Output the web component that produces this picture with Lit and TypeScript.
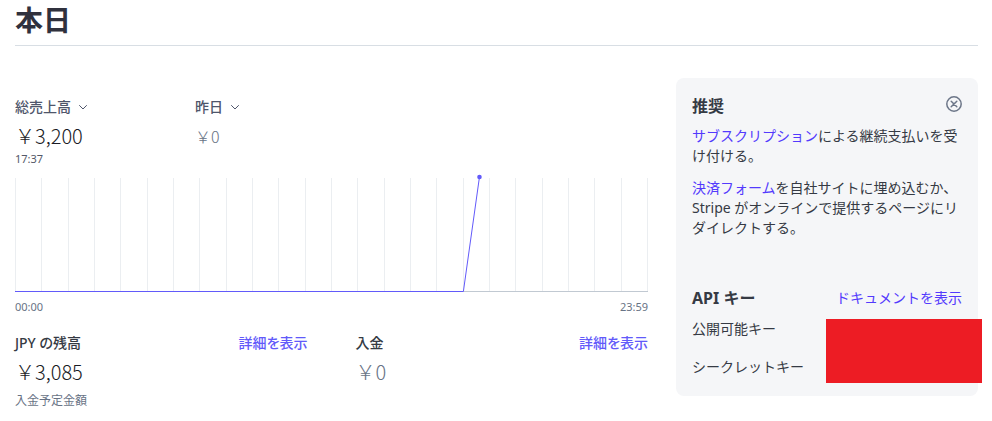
import { LitElement, html, css } from "lit";
import { customElement, property } from "lit/decorators.js";

const HOURS = 24;
const FULLWIDTH_YEN = "\uFFE5";

/** Compact drop-down whose chevron follows the chosen text. */
@customElement("metric-select")
class MetricSelect extends LitElement {
  @property() value = "";
  @property() label = "";

  static styles = css`
    :host {
      display: flex;
      align-items: center;
      gap: 8px;
      height: 20px;
      color: #4f566b;
    }
    select {
      appearance: none;
      border: 0;
      margin: 0;
      padding: 0;
      background: none;
      color: inherit;
      font: inherit;
      font-weight: 500;
      line-height: 20px;
      field-sizing: content;
      cursor: pointer;
    }
    .chevron {
      width: 8px;
      height: 8px;
      pointer-events: none;
    }
  `;

  render() {
    return html`
      <select aria-label=${this.label}><option>${this.value}</option></select>
      <svg class="chevron" viewBox="0 0 8 8" fill="none" stroke="currentColor" stroke-linecap="round" stroke-linejoin="round" aria-hidden="true">
        <path d="M.5 2.5 4 6l3.500-3.500" />
      </svg>
    `;
  }
}

/** Hourly sales line for a single day. */
@customElement("sales-chart")
class SalesChart extends LitElement {
  @property({ type: Number }) from = 17;
  @property({ type: Number }) to = 17.61;

  static styles = css`
    :host {
      display: block;
    }
    .plot {
      position: relative;
      display: flex;
      justify-content: space-between;
      height: 113px;
      border-bottom: 1px solid #c1c9d2;
    }
    .tick {
      width: 1px;
      background: #ebeef1;
    }
    .line {
      position: absolute;
      top: 0;
      left: 0;
      width: 100%;
      height: 114px;
      overflow: visible;
      color: #625afa;
    }
    .axis {
      display: flex;
      justify-content: space-between;
      margin-top: 6px;
      font-size: 11px;
      line-height: 18px;
      color: #687385;
    }
  `;

  render() {
    const pct = (hour: number) => `${(hour / HOURS) * 100}%`;
    return html`
      <div class="plot">
        ${Array.from({ length: HOURS + 1 }, () => html`<span class="tick"></span>`)}
        <svg class="line" stroke="currentColor" fill="currentColor" role="img" aria-label="本日の総売上高">
          <line x1="0" y1="113.500" x2=${pct(this.from)} y2="113.500" />
          <line x1=${pct(this.from)} y1="113.500" x2=${pct(this.to)} y2="-1" />
          <circle cx=${pct(this.to)} cy="-1" r="2.300" stroke="none" />
        </svg>
      </div>
      <div class="axis"><span>00:00</span><span>23:59</span></div>
    `;
  }
}

@customElement("app-root")
class AppRoot extends LitElement {
  static styles = css`
    :host {
      display: block;
      padding: 0 14px 0 15px;
      background: #fff;
      color: #353a44;
      font-family: "Noto Sans", "Noto Sans CJK JP", sans-serif;
      font-size: 14px;
      line-height: 20px;
    }
    h1,
    h2,
    h3,
    p,
    dl,
    dt,
    dd {
      margin: 0;
    }
    a {
      color: #533afd;
      text-decoration: none;
    }
    .title {
      padding-bottom: 5px;
      border-bottom: 1px solid #d8dee4;
      font-size: 28px;
      font-weight: 700;
      line-height: 40px;
      color: #30313d;
    }
    .body {
      display: grid;
      grid-template-columns: minmax(0, 1fr) 302px;
      gap: 28px;
      align-items: start;
      margin-top: 32px;
    }
    .overview {
      padding-top: 19px;
    }
    .metrics {
      display: grid;
      grid-template-columns: 180px 1fr;
      margin-bottom: 10px;
    }
    .amount {
      margin-top: 7px;
      font-family: "Noto Sans CJK JP", sans-serif;
      font-size: 20px;
      font-weight: 300;
      line-height: 24px;
      color: #1a1b25;
    }
    .muted {
      color: #687385;
    }
    .small {
      font-size: 16px;
    }
    .time {
      margin-top: 2px;
      font-size: 11px;
      line-height: 18px;
      color: #545969;
    }
    .balances {
      display: grid;
      grid-template-columns: 1fr 1fr;
      gap: 48px;
      margin-top: 17px;
    }
    .head {
      display: flex;
      justify-content: space-between;
      align-items: center;
    }
    .balances .head {
      font-feature-settings: "palt";
    }
    .balances h3 {
      font-size: 14px;
      font-weight: 500;
    }
    .balances a {
      color: #625afa;
      font-weight: 500;
    }
    .note {
      margin-top: 8px;
      font-size: 12px;
      line-height: 18px;
      color: #687385;
    }
    .card {
      padding: 16px 16px 19px;
      border-radius: 8px;
      background: #f5f6f8;
    }
    .card h2 {
      font-size: 16px;
      font-weight: 700;
      line-height: 24px;
    }
    .card p {
      margin-top: 8px;
    }
    .card p + p {
      margin-top: 12px;
    }
    .close {
      display: flex;
      padding: 0 0 4px;
      border: 0;
      background: none;
      color: #6c7688;
      cursor: pointer;
    }
    .close svg {
      width: 16px;
      height: 16px;
    }
    .api {
      margin-top: 48px;
    }
    .keys {
      position: relative;
      display: grid;
      gap: 18px;
      margin-top: 9px;
    }
    .redacted {
      position: absolute;
      top: 0;
      right: -20px;
      width: 156px;
      height: 64px;
      background: #ed1c24;
    }
  `;

  private amount(value: string, extra = "") {
    return html`<div class="amount ${extra}">${FULLWIDTH_YEN}${value}</div>`;
  }

  render() {
    return html`
      <h1 class="title">本日</h1>
      <div class="body">
        <main class="overview">
          <div class="metrics">
            <div>
              <metric-select label="指標" value="総売上高"></metric-select>
              ${this.amount("3,200")}
              <div class="time">17:37</div>
            </div>
            <div>
              <metric-select label="比較期間" value="昨日"></metric-select>
              ${this.amount("0", "muted small")}
            </div>
          </div>
          <sales-chart></sales-chart>
          <div class="balances">
            <section>
              <div class="head"><h3>JPY の残高</h3><a href="#balance">詳細を表示</a></div>
              ${this.amount("3,085")}
              <div class="note">入金予定金額</div>
            </section>
            <section>
              <div class="head"><h3>入金</h3><a href="#payouts">詳細を表示</a></div>
              ${this.amount("0", "muted")}
            </section>
          </div>
        </main>
        <aside class="card">
          <div class="head">
            <h2>推奨</h2>
            <button class="close" aria-label="閉じる">
              <svg viewBox="0 0 16 16" fill="none" stroke="currentColor" stroke-width="1.500" stroke-linecap="round" aria-hidden="true">
                <circle cx="8" cy="8" r="7.200" />
                <path d="m5.200 5.200 5.600 5.600m0-5.600-5.600 5.600" />
              </svg>
            </button>
          </div>
          <p><a href="#subscriptions">サブスクリプション</a>による継続支払いを受け付ける。</p>
          <p><a href="#checkout">決済フォーム</a>を自社サイトに埋め込むか、Stripe がオンラインで提供するページにリダイレクトする。</p>
          <div class="head api"><h2>API キー</h2><a href="#docs">ドキュメントを表示</a></div>
          <dl class="keys">
            <dt>公開可能キー</dt>
            <dt>シークレットキー</dt>
            <dd class="redacted"></dd>
          </dl>
        </aside>
      </div>
    `;
  }
}
